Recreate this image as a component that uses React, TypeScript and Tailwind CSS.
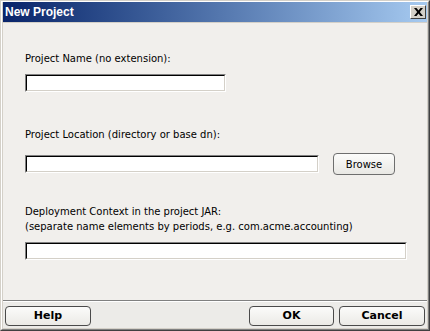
import React from "react";

const label = "text-[10px] leading-[15px] text-black";
const dv = { fontFamily: '"DejaVu Sans", sans-serif' };

function Field({ w }: { w: string }) {
  return (
    <div className={`${w} h-[18px] border-t border-l border-[#808080] border-b border-r border-b-white border-r-white`}>
      <div className="h-full w-full bg-white border-t border-l border-black border-b border-r border-b-[#d4d0c8] border-r-[#d4d0c8]" />
    </div>
  );
}

function BarButton({ children, w }: { children: React.ReactNode; w: string }) {
  return (
    <div
      className={`${w} h-[20px] rounded-[4px] border border-[#4a4a4a] bg-gradient-to-b from-[#fbfbfa] to-[#ebeae6] flex items-center justify-center text-[11px] font-bold text-black`}
    >
      {children}
    </div>
  );
}

export default function App() {
  return (
    <div
      className="w-[430px] h-[331px] bg-[#d4d0c8] flex flex-col border border-t-[#d4d0c8] border-l-[#d4d0c8] border-b-[#404040] border-r-[#404040]"
      style={dv}
    >
      <div className="flex flex-col flex-1 border border-t-white border-l-white border-b-[#808080] border-r-[#808080] px-px pb-px">
        {/* title bar */}
        <div className="h-[20px] bg-gradient-to-r from-[#0a246a] to-[#a6caf0] flex items-center justify-between pl-[2px] pr-[1px]">
          <span
            className="text-white font-bold text-[12px] leading-none"
            style={{ fontFamily: '"Liberation Sans", Arial, sans-serif' }}
          >
            New Project
          </span>
          <div className="w-[16px] h-[14px] bg-[#d4d0c8] border border-t-white border-l-white border-b-[#404040] border-r-[#404040] flex items-center justify-center">
            <svg width="9" height="8" viewBox="0 0 9 8">
              <path d="M0 0h2.5l2 2.6L6.5 0H9L5.8 4 9 8H6.5l-2-2.6-2 2.6H0l3.2-4z" fill="#000" />
            </svg>
          </div>
        </div>
        <div className="h-px" />
        {/* content */}
        <div className="flex-1 bg-[#f1efec] pl-[22px] flex flex-col border-b border-[#808080]">
          <div className={`${label} mt-[28px]`}>Project Name (no extension):</div>
          <div className="mt-[8px]">
            <Field w="w-[201px]" />
          </div>
          <div className={`${label} mt-[35px]`}>Project Location (directory or base dn):</div>
          <div className="mt-[11px] flex items-center h-[22px]">
            <Field w="w-[294px]" />
            <div className="ml-[14px] w-[62px] h-[22px] rounded-[4px] border border-[#6e6e6e] bg-gradient-to-b from-[#fcfcfb] to-[#e9e8e4] flex items-center justify-center text-[10px] text-black">
              Browse
            </div>
          </div>
          <div className={`${label} mt-[29px]`}>Deployment Context in the project JAR:</div>
          <div className={label}>(separate name elements by periods, e.g. com.acme.accounting)</div>
          <div className="mt-[8px]">
            <Field w="w-[382px]" />
          </div>
        </div>
        {/* button bar */}
        <div className="h-[27px] bg-[#ecebe8] border-t border-white flex items-center px-[2px] pt-[2px]">
          <BarButton w="w-[86px]">Help</BarButton>
          <div className="flex-1" />
          <BarButton w="w-[85px]">OK</BarButton>
          <div className="w-[5px]" />
          <BarButton w="w-[86px]">Cancel</BarButton>
        </div>
      </div>
    </div>
  );
}
